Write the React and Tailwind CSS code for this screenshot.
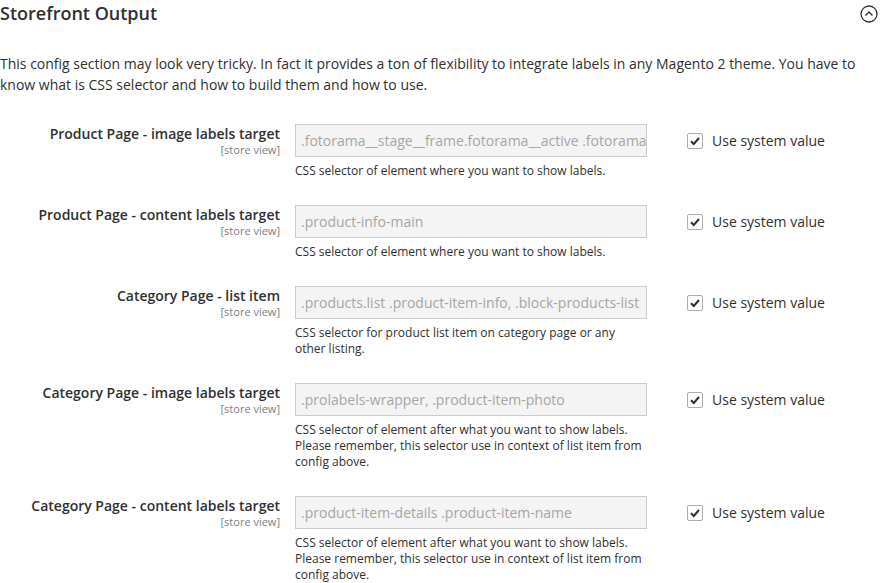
import React from "react";

const fields = [
  {
    label: "Product Page - image labels target",
    value: ".fotorama__stage__frame.fotorama__active .fotorama__img",
    note: ["CSS selector of element where you want to show labels."],
  },
  {
    label: "Product Page - content labels target",
    value: ".product-info-main",
    note: ["CSS selector of element where you want to show labels."],
  },
  {
    label: "Category Page - list item",
    value: ".products.list .product-item-info, .block-products-list",
    note: ["CSS selector for product list item on category page or any", "other listing."],
  },
  {
    label: "Category Page - image labels target",
    value: ".prolabels-wrapper, .product-item-photo",
    note: [
      "CSS selector of element after what you want to show labels.",
      "Please remember, this selector use in context of list item from",
      "config above.",
    ],
  },
  {
    label: "Category Page - content labels target",
    value: ".product-item-details .product-item-name",
    note: [
      "CSS selector of element after what you want to show labels.",
      "Please remember, this selector use in context of list item from",
      "config above.",
    ],
  },
];

export default function App() {
  return (
    <div
      className="w-[881px] h-[583px] overflow-hidden bg-white text-[#303030]"
      style={{ fontFamily: '"Open Sans", sans-serif' }}
    >
      {/* HEADER */}
      <div className="flex items-center justify-between h-[27px] pr-[3px]">
        <h2 className="text-[18px] font-semibold leading-[27px]">Storefront Output</h2>
        <CollapseIcon />
      </div>

      {/* DESCRIPTION */}
      <p className="mt-[26px] text-[14px] leading-[21px] pr-[20px]">
        This config section may look very tricky. In fact it provides a ton of flexibility to integrate labels in any
        Magento 2 theme. You have to know what is CSS selector and how to build them and how to use.
      </p>

      {/* FIELDS */}
      <div className="mt-[29px] flex flex-col gap-[26px]">
        {fields.map((f) => (
          <FieldRow key={f.label} field={f} />
        ))}
      </div>
    </div>
  );
}

function FieldRow({ field }) {
  return (
    <div className="flex items-start">
      <div className="w-[280px] text-right pt-[1px]">
        <div className="text-[14px] font-semibold leading-[18px]">{field.label}</div>
        <div className="text-[11px] leading-[14px] text-[#808080]">[store view]</div>
      </div>

      <div className="ml-[15px] w-[352px]">
        <div className="h-[33px] border border-[#cccccc] bg-[#f4f4f4] px-[5px] flex items-center overflow-hidden">
          <span className="text-[14px] text-[#a6a6a6] whitespace-nowrap">{field.value}</span>
        </div>
        <div className="mt-[6px] text-[12px] leading-[16px]">
          {field.note.map((line) => (
            <div key={line}>{line}</div>
          ))}
        </div>
      </div>

      <div className="ml-[40px] flex items-center h-[33px]">
        <span className="w-[16px] h-[16px] border border-[#adadad] rounded-[2px] bg-white flex items-center justify-center">
          <svg width="12" height="12" viewBox="0 0 12 12">
            <path d="M2 6.2 L4.8 9 L10 3" fill="none" stroke="#303030" strokeWidth="2" />
          </svg>
        </span>
        <span className="ml-[9px] text-[14px]">Use system value</span>
      </div>
    </div>
  );
}

function CollapseIcon() {
  return (
    <svg width="18" height="18" viewBox="0 0 18 18">
      <circle cx="9" cy="9" r="8" fill="none" stroke="#303030" strokeWidth="1.3" />
      <path d="M5.5 10.5 L9 7 L12.5 10.5" fill="none" stroke="#303030" strokeWidth="1.4" />
    </svg>
  );
}
